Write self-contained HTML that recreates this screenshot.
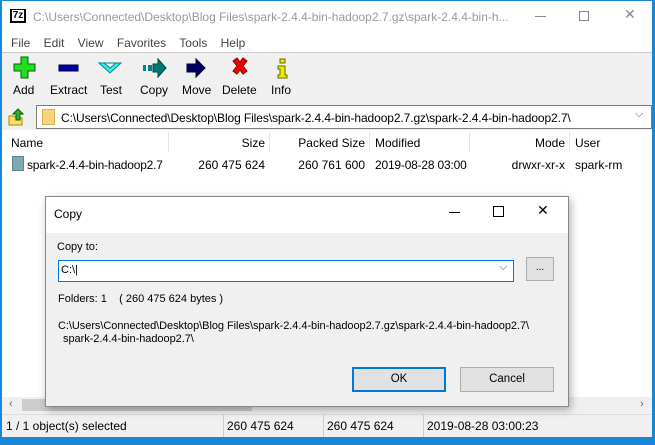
<!DOCTYPE html>
<html><head><style>
*{margin:0;padding:0;box-sizing:border-box}
body{width:655px;height:445px;overflow:hidden;background:#1a86d6;font-family:"Liberation Sans",sans-serif;font-size:12px;color:#000;position:relative}
.a{position:absolute;white-space:nowrap}
#win{position:absolute;left:2px;top:1px;width:650px;height:436px;background:#fff}
.tb{font-size:12px}
.r{text-align:right}
</style></head><body>
<div id="win">
 <div class="a" style="left:8px;top:8px;width:16px;height:14px;background:#000;color:#fff;font-size:10px;font-weight:bold;line-height:12px;text-align:center;border:1px solid #000"><span style="background:#fff;color:#000;padding:0 1px">7z</span></div>
 <div class="a" style="left:31px;top:9px;color:#999;font-size:12px">C:\Users\Connected\Desktop\Blog Files\spark-2.4.4-bin-hadoop2.7.gz\spark-2.4.4-bin-h...</div>
 <div class="a" style="left:533px;top:15px;width:11px;height:1px;background:#888"></div>
 <div class="a" style="left:577px;top:10px;width:10px;height:10px;border:1px solid #888"></div>
 <div class="a" style="left:622px;top:5px;color:#888;font-size:14px">✕</div>
 <div class="a tb" style="left:9px;top:35px;color:#444">File&nbsp;&nbsp;&nbsp; Edit&nbsp;&nbsp;&nbsp; View&nbsp;&nbsp;&nbsp; Favorites&nbsp;&nbsp;&nbsp; Tools&nbsp;&nbsp;&nbsp; Help</div>
 <div class="a" style="left:0;top:51px;width:650px;height:52px;background:#f0f0f0;border-top:1px solid #ccc"></div>
 <svg class="a" style="left:0;top:54px" width="300" height="26">
  <path d="M19 2h7v7h7v7h-7v7h-7v-7h-7v-7h7z" fill="#2d2" stroke="#060" stroke-width="1"/>
  <rect x="57" y="10" width="19" height="6" fill="#00a" stroke="#003"/>
  <path d="M97 8h22l-11 10z M102 8l6 5 6-5" fill="#3ee" stroke="#088"/>
  <rect x="141" y="10" width="3" height="6" fill="#088"/><rect x="146" y="10" width="4" height="6" fill="#088"/><path d="M151 9h5v-5l8 9-8 9v-5h-5z" fill="#077" stroke="#044"/>
  <path d="M185 9h9v-5l9 9-9 9v-5h-9z" fill="#006" stroke="#003"/>
  <path d="M231 6l4-3 3 4 3-4 4 3-4 5 4 5-4 3-3-4-3 4-4-3 4-5z" fill="#e00" stroke="#800"/>
  <rect x="278" y="4" width="5" height="4" fill="#ee0" stroke="#660"/><path d="M276 11h7v9h2v3h-9v-3h2v-6h-2z" fill="#ee0" stroke="#660"/>
 </svg>
 <div class="a tb" style="left:11px;top:82px">Add</div>
 <div class="a tb" style="left:48px;top:82px">Extract</div>
 <div class="a tb" style="left:98px;top:82px">Test</div>
 <div class="a tb" style="left:138px;top:82px">Copy</div>
 <div class="a tb" style="left:180px;top:82px">Move</div>
 <div class="a tb" style="left:220px;top:82px">Delete</div>
 <div class="a tb" style="left:269px;top:82px">Info</div>
 <div class="a" style="left:0;top:103px;width:650px;height:26px;background:#f0f0f0"></div>
 <svg class="a" style="left:6px;top:107px" width="16" height="18"><path d="M1 8h5l2 2h6v7h-13z" fill="#fd6" stroke="#a80"/><path d="M8 12v-6h-3l5-5 5 5h-3v6z" fill="#3a3" stroke="#060"/></svg>
 <div class="a" style="left:34px;top:104px;width:616px;height:24px;background:#fff;border:1px solid #7a7a7a"></div>
 <div class="a" style="left:40px;top:108px;width:13px;height:16px;background:#f6d57d;border:1px solid #d8b050"></div>
 <div class="a tb" style="left:59px;top:110px;letter-spacing:-.1px">C:\Users\Connected\Desktop\Blog Files\spark-2.4.4-bin-hadoop2.7.gz\spark-2.4.4-bin-hadoop2.7\</div>
 <div class="a" style="left:633px;top:107px;color:#555;font-size:11px">⌵</div>
 <div class="a tb" style="left:9px;top:135px">Name</div>
 <div class="a" style="left:166px;top:131px;width:1px;height:20px;background:#e5e5e5"></div>
 <div class="a tb r" style="left:167px;width:96px;top:135px">Size</div>
 <div class="a" style="left:267px;top:131px;width:1px;height:20px;background:#e5e5e5"></div>
 <div class="a tb r" style="left:267px;width:96px;top:135px">Packed Size</div>
 <div class="a" style="left:367px;top:131px;width:1px;height:20px;background:#e5e5e5"></div>
 <div class="a tb" style="left:373px;top:135px">Modified</div>
 <div class="a" style="left:467px;top:131px;width:1px;height:20px;background:#e5e5e5"></div>
 <div class="a tb r" style="left:467px;width:96px;top:135px">Mode</div>
 <div class="a" style="left:567px;top:131px;width:1px;height:20px;background:#e5e5e5"></div>
 <div class="a tb" style="left:573px;top:135px">User</div>
 <div class="a" style="left:10px;top:155px;width:12px;height:15px;background:#7fa8b0;border:1px solid #5a8890"></div>
 <div class="a tb" style="left:25px;top:157px;letter-spacing:-.2px">spark-2.4.4-bin-hadoop2.7</div>
 <div class="a tb r" style="left:167px;width:96px;top:157px">260 475 624</div>
 <div class="a tb r" style="left:267px;width:96px;top:157px">260 761 600</div>
 <div class="a tb" style="left:373px;top:157px;letter-spacing:-.2px">2019-08-28 03:00</div>
 <div class="a tb r" style="left:467px;width:96px;top:157px">drwxr-xr-x</div>
 <div class="a tb" style="left:573px;top:157px">spark-rm</div>
 <div class="a" style="left:0;top:396px;width:650px;height:17px;background:#f0f0f0"></div>
 <div class="a" style="left:20px;top:398px;width:230px;height:12px;background:#cdcdcd"></div>
 <div class="a" style="left:7px;top:397px;color:#666;font-size:11px">‹</div>
 <div class="a" style="left:638px;top:397px;color:#666;font-size:11px">›</div>
 <div class="a" style="left:0;top:413px;width:650px;height:23px;background:#f0f0f0;border-top:1px solid #ddd"></div>
 <div class="a tb" style="left:4px;top:418px">1 / 1 object(s) selected</div>
 <div class="a" style="left:221px;top:414px;width:1px;height:22px;background:#ccc"></div>
 <div class="a tb" style="left:225px;top:418px">260 475 624</div>
 <div class="a" style="left:321px;top:414px;width:1px;height:22px;background:#ccc"></div>
 <div class="a tb" style="left:325px;top:418px">260 475 624</div>
 <div class="a" style="left:421px;top:414px;width:1px;height:22px;background:#ccc"></div>
 <div class="a tb" style="left:425px;top:418px">2019-08-28 03:00:23</div>
</div>
<div class="a" style="left:45px;top:196px;width:524px;height:211px;background:#f0f0f0;border:1px solid #888;box-shadow:2px 3px 8px rgba(0,0,0,.3)">
 <div class="a" style="left:0;top:0;width:522px;height:36px;background:#fff"></div>
 <div class="a tb" style="left:8px;top:10px">Copy</div>
 <div class="a" style="left:403px;top:15px;width:11px;height:1px;background:#000"></div>
 <div class="a" style="left:447px;top:9px;width:11px;height:11px;border:1px solid #000"></div>
 <div class="a" style="left:491px;top:5px;font-size:14px">✕</div>
 <div class="a" style="left:11px;top:44px;font-size:11px">Copy to:</div>
 <div class="a" style="left:12px;top:63px;width:456px;height:22px;background:#fff;border:1px solid #0078d7"></div>
 <div class="a" style="left:15px;top:67px;font-size:11px">C:\|</div>
 <div class="a" style="left:453px;top:64px;color:#555;font-size:11px">⌵</div>
 <div class="a" style="left:480px;top:60px;width:28px;height:24px;background:#e1e1e1;border:1px solid #adadad;text-align:center;font-size:10px;line-height:20px">...</div>
 <div class="a" style="left:12px;top:96px;font-size:11px">Folders: 1&nbsp;&nbsp;&nbsp; ( 260 475 624 bytes )</div>
 <div class="a" style="left:12px;top:123px;font-size:11px;letter-spacing:-.05px">C:\Users\Connected\Desktop\Blog Files\spark-2.4.4-bin-hadoop2.7.gz\spark-2.4.4-bin-hadoop2.7\</div>
 <div class="a" style="left:17px;top:136px;font-size:11px;letter-spacing:-.05px">spark-2.4.4-bin-hadoop2.7\</div>
 <div class="a" style="left:306px;top:170px;width:94px;height:25px;background:#e1e1e1;border:2px solid #0078d7;text-align:center;line-height:21px;font-size:11.5px">OK</div>
 <div class="a" style="left:414px;top:170px;width:94px;height:25px;background:#e1e1e1;border:1px solid #adadad;text-align:center;line-height:23px;font-size:11.5px">Cancel</div>
</div>
</body></html>
